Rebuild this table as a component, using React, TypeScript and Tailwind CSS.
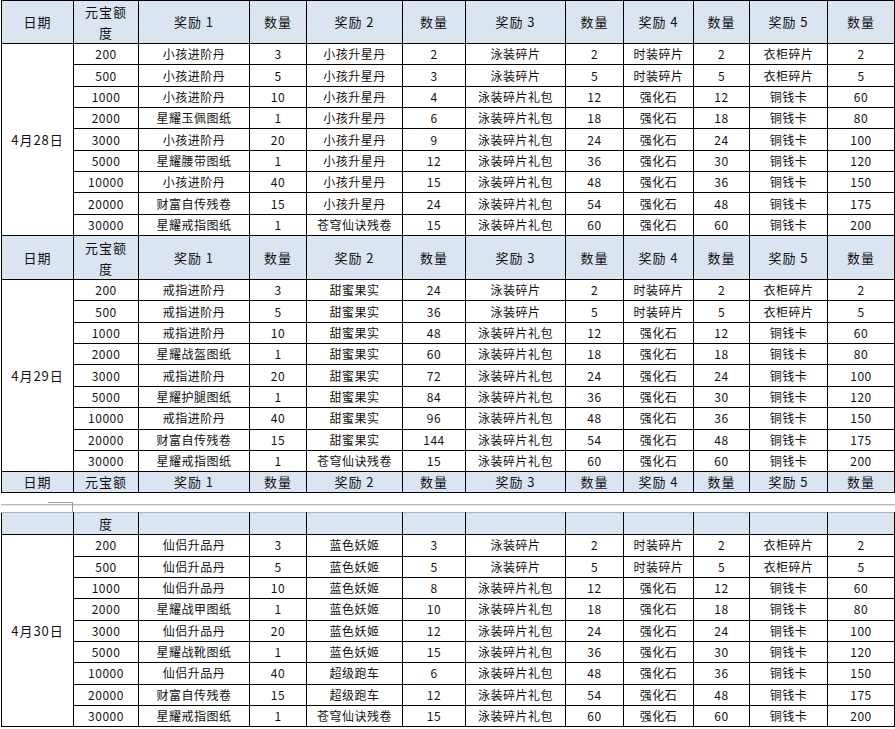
const HEAD = ["日期", "元宝额度", "奖励 1", "数量", "奖励 2", "数量", "奖励 3", "数量", "奖励 4", "数量", "奖励 5", "数量"];

const AMOUNTS = ["200", "500", "1000", "2000", "3000", "5000", "10000", "20000", "30000"];

// 奖励 3 / 4 / 5 are the same every day
const REWARD_3 = ["泳装碎片", "泳装碎片", ...Array(7).fill("泳装碎片礼包")];
const COUNT_3 = [2, 5, 12, 18, 24, 36, 48, 54, 60];
const REWARD_4 = ["时装碎片", "时装碎片", ...Array(7).fill("强化石")];
const COUNT_4 = [2, 5, 12, 18, 24, 30, 36, 48, 60];
const REWARD_5 = ["衣柜碎片", "衣柜碎片", ...Array(7).fill("铜钱卡")];
const COUNT_5 = [2, 5, 60, 80, 100, 120, 150, 175, 200];

type Day = {
  date: string;
  r1: string[];
  c1: number[];
  r2: string[];
  c2: number[];
};

const DAYS: Day[] = [
  {
    date: "4月28日",
    r1: ["小孩进阶丹", "小孩进阶丹", "小孩进阶丹", "星耀玉佩图纸", "小孩进阶丹", "星耀腰带图纸", "小孩进阶丹", "财富自传残卷", "星耀戒指图纸"],
    c1: [3, 5, 10, 1, 20, 1, 40, 15, 1],
    r2: [...Array(8).fill("小孩升星丹"), "苍穹仙诀残卷"],
    c2: [2, 3, 4, 6, 9, 12, 15, 24, 15],
  },
  {
    date: "4月29日",
    r1: ["戒指进阶丹", "戒指进阶丹", "戒指进阶丹", "星耀战盔图纸", "戒指进阶丹", "星耀护腿图纸", "戒指进阶丹", "财富自传残卷", "星耀戒指图纸"],
    c1: [3, 5, 10, 1, 20, 1, 40, 15, 1],
    r2: [...Array(8).fill("甜蜜果实"), "苍穹仙诀残卷"],
    c2: [24, 36, 48, 60, 72, 84, 96, 144, 15],
  },
  {
    date: "4月30日",
    r1: ["仙侣升品丹", "仙侣升品丹", "仙侣升品丹", "星耀战甲图纸", "仙侣升品丹", "星耀战靴图纸", "仙侣升品丹", "财富自传残卷", "星耀戒指图纸"],
    c1: [3, 5, 10, 1, 20, 1, 40, 15, 1],
    r2: ["蓝色妖姬", "蓝色妖姬", "蓝色妖姬", "蓝色妖姬", "蓝色妖姬", "蓝色妖姬", "超级跑车", "超级跑车", "苍穹仙诀残卷"],
    c2: [3, 5, 8, 10, 12, 15, 6, 12, 15],
  },
];

const cell = "border border-black p-0 text-center align-middle";
const head = `${cell} bg-[#dbe5f1] text-[13px] tracking-[1px]`;

function Cols() {
  return (
    <colgroup>
      <col className="w-[72px]" />
      <col className="w-[65px]" />
      <col className="w-[111px]" />
      <col className="w-[57px]" />
      <col className="w-[96px]" />
      <col className="w-[63px]" />
      <col className="w-[100px]" />
      <col className="w-[58px]" />
      <col className="w-[70px]" />
      <col className="w-[56px]" />
      <col className="w-[78px]" />
      <col className="w-[67px]" />
    </colgroup>
  );
}

function HeaderRow({ tall, rowClass }: { tall: boolean; rowClass: string }) {
  return (
    <tr className={rowClass}>
      {HEAD.map((h, i) => (
        <td key={i} className={head}>
          {i === 1 ? (
            tall ? (
              <span className="block leading-[21px]">元宝额<br />度</span>
            ) : (
              "元宝额"
            )
          ) : (
            h
          )}
        </td>
      ))}
    </tr>
  );
}

function DayRows({ day }: { day: Day }) {
  return (
    <>
      {AMOUNTS.map((amt, i) => (
        <tr key={amt} className="h-[21.35px]">
          {i === 0 ? (
            <td rowSpan={9} className={`${cell} text-[13px] tracking-[1px]`}>
              {day.date}
            </td>
          ) : null}
          <td className={cell}>{amt}</td>
          <td className={cell}>{day.r1[i]}</td>
          <td className={cell}>{day.c1[i]}</td>
          <td className={cell}>{day.r2[i]}</td>
          <td className={cell}>{day.c2[i]}</td>
          <td className={cell}>{REWARD_3[i]}</td>
          <td className={cell}>{COUNT_3[i]}</td>
          <td className={cell}>{REWARD_4[i]}</td>
          <td className={cell}>{COUNT_4[i]}</td>
          <td className={cell}>{REWARD_5[i]}</td>
          <td className={cell}>{COUNT_5[i]}</td>
        </tr>
      ))}
    </>
  );
}

export default function App() {
  return (
    <main className="h-[729px] w-[895px] overflow-hidden bg-white pl-px font-['Noto_Sans_CJK_SC','Liberation_Sans',sans-serif] text-[12px] tracking-[0.5px] text-[#111]">
      <table className="w-[894px] table-fixed border-collapse">
        <Cols />
        <tbody>
          <HeaderRow tall rowClass="h-[43px]" />
          <DayRows day={DAYS[0]} />
          <HeaderRow tall rowClass="h-[44px]" />
          <DayRows day={DAYS[1]} />
          <HeaderRow tall={false} rowClass="h-[21px]" />
        </tbody>
      </table>

      {/* page break between the two pages of the document */}
      <div className="relative h-[19px] pt-[11px]">
        <div className="h-px bg-[#b8b8b8]" />
        <div className="h-px bg-[#e2e2e2]" />
        <div className="absolute left-[47px] top-[9px] h-[10px] w-[25px] border-r border-t border-[#9a9a9a]" />
      </div>

      <table className="w-[894px] table-fixed border-collapse">
        <Cols />
        <tbody>
          <tr className="h-[22px]">
            {HEAD.map((_, i) => (
              <td key={i} className={`${head} border-t-[#a9b4c2] border-t-dotted`}>
                {i === 1 ? "度" : ""}
              </td>
            ))}
          </tr>
          <DayRows day={DAYS[2]} />
        </tbody>
      </table>
    </main>
  );
}
